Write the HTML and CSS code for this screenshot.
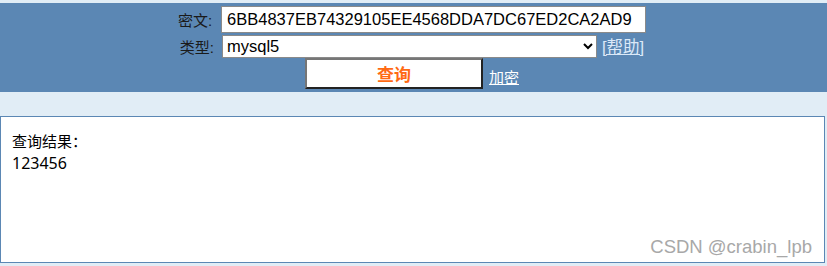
FILE: index.html
```html
<!DOCTYPE html>
<html>
<head>
<meta charset="utf-8">
<link rel="stylesheet" href="styles.css">
</head>
<body>
<div class="header">
  <div class="row">
    <span class="label">密文:</span>
    <input class="cipher" type="text" value="6BB4837EB74329105EE4568DDA7DC67ED2CA2AD9">
  </div>
  <div class="row">
    <span class="label">类型:</span>
    <select class="type"><option>mysql5</option></select>
    <a class="help" href="#">[帮助]</a>
  </div>
  <div class="row">
    <button class="query">查询</button>
    <a class="enc" href="#">加密</a>
  </div>
</div>
<div class="result">
  <div class="res-title">查询结果：</div>
  <div class="res-value">123456</div>
  <div class="watermark">CSDN @crabin_lpb</div>
</div>
</body>
</html>
```
FILE: styles.css
```css
html, body {
  margin: 0;
  padding: 0;
}
body {
  background: #e1edf6;
  font-family: "Liberation Sans", "Noto Sans CJK SC", sans-serif;
  padding-top: 3px;
  height: 266px;
  box-sizing: border-box;
}
.header {
  background: #5b87b4;
  padding: 3px 3px 3px 0;
  display: flex;
  flex-direction: column;
  align-items: center;
}
.row {
  display: flex;
  align-items: center;
  justify-content: center;
}
.label {
  font-size: 15px;
  color: #1a1a1a;
  margin-right: 9px;
}
.cipher {
  width: 425px;
  height: 27px;
  box-sizing: border-box;
  border: 1px solid #8a8a8a;
  font-family: "Liberation Sans", sans-serif;
  font-size: 16.5px;
  padding: 0 4px 0 5px;
  margin: 0;
  color: #000;
}
.row:nth-child(2) {
  margin-top: 1px;
}
.row:nth-child(2) .label {
  margin-right: 8px;
}
.type {
  width: 375px;
  height: 23px;
  box-sizing: border-box;
  border: 1px solid #8a8a8a;
  font-family: "Liberation Sans", sans-serif;
  font-size: 16.5px;
  margin: 0;
  background: #fff;
  color: #000;
}
.help {
  color: #dbe9f8;
  font-size: 16.5px;
  margin-left: 5px;
}
.query {
  width: 178px;
  height: 31px;
  box-sizing: border-box;
  background: #fff;
  border-style: solid;
  border-width: 2px;
  border-color: #767676 #222 #222 #767676;
  color: #ff6a13;
  font-weight: bold;
  font-size: 17px;
  font-family: "Liberation Sans", "Noto Sans CJK SC", sans-serif;
  margin: 0;
  padding: 0;
}
.enc {
  color: #fff;
  font-size: 15px;
  margin-left: 6px;
  margin-top: 6px;
}
.result {
  position: relative;
  margin-top: 24px;
  width: 825px;
  height: 147px;
  box-sizing: border-box;
  background: #fff;
  border: 1px solid #5b87b4;
  padding: 13px 11px;
  font-family: "Noto Sans", "Noto Sans CJK SC", sans-serif;
  font-size: 15px;
  line-height: 22px;
  color: #000;
}
.res-value {
  font-size: 16px;
}
.watermark {
  position: absolute;
  right: 12px;
  bottom: 4px;
  font-family: "Liberation Sans", sans-serif;
  font-size: 18.5px;
  color: #a8a8a8;
}
```
